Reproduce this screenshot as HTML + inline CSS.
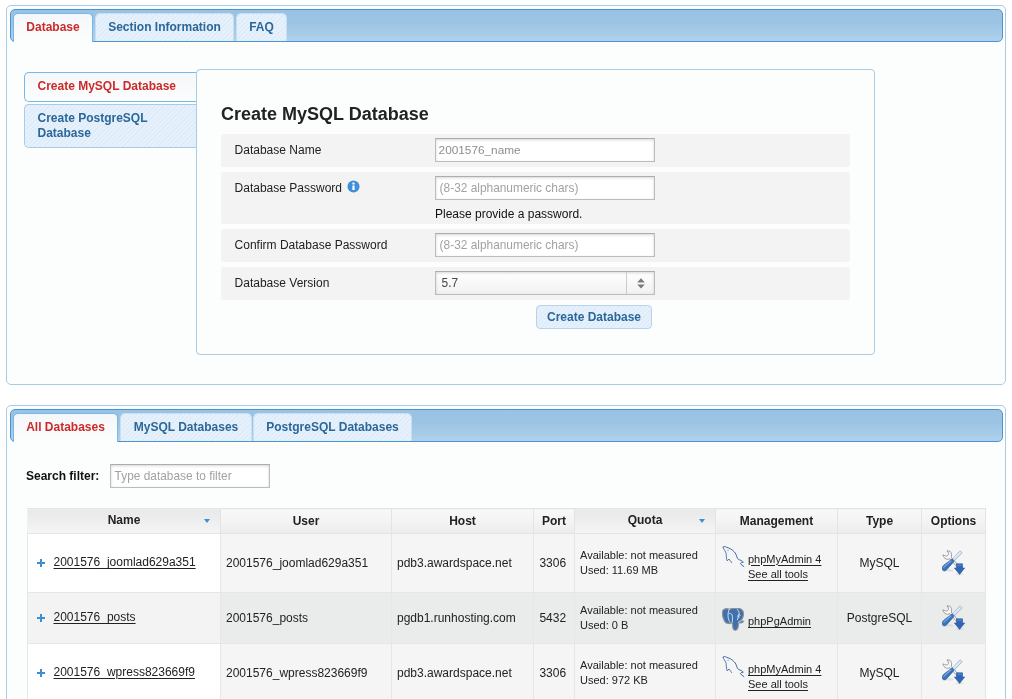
<!DOCTYPE html>
<html><head><meta charset="utf-8">
<title>Database Manager</title>
<style>
*{box-sizing:border-box;margin:0;padding:0}
#wrap{will-change:transform;position:absolute;left:0;top:0;width:1012px;height:699px}html,body{width:1012px;height:699px;overflow:hidden;background:#fff}
body{font-family:"Liberation Sans",Arial,Helvetica,sans-serif;font-size:12px;color:#222;position:relative}
.abs{position:absolute}
.box{position:absolute;border:1px solid #a9cbe4;border-radius:5px;background:#fcfdfd}
.hdr{position:absolute;border:1px solid #4a94d5;border-radius:5px;background:linear-gradient(#99c2e3 0%,#9bc4e4 42%,#b0d1ea 100%)}
.tab{position:absolute;top:3px;height:28px;border:1px solid #c9def1;border-bottom:0;border-radius:5px 5px 0 0;
  font-weight:bold;font-size:12px;line-height:26px;text-align:center;color:#2b6799;
  background:repeating-linear-gradient(135deg,#e7f1fc 0,#e7f1fc 1.9px,#dae9f7 2.2px,#dae9f7 2.8px,#e7f1fc 3.1px)}
.tab.on{height:29px;background:linear-gradient(#f4f7f9,#fcfdfd);color:#cc2a2a;border-color:#79b7e7}
.vtab{position:absolute;left:24px;width:171.5px;border:1px solid #a9cbe4;border-right:0;border-radius:5px 0 0 5px;
  font-weight:bold;font-size:12px;color:#2b6799;padding-left:12.5px;
  background:repeating-linear-gradient(135deg,#e7f1fc 0,#e7f1fc 1.9px,#dae9f7 2.2px,#dae9f7 2.8px,#e7f1fc 3.1px)}
.vtab.on{background:linear-gradient(#f4f7f9,#fcfdfd);color:#cc2a2a;border-color:#79b7e7}
.row{position:absolute;left:221px;width:629px;background:#f3f3f3;border-radius:3px}
.lbl{position:absolute;left:234.6px;font-size:12px;color:#222;white-space:nowrap}
.inp{position:absolute;left:435px;width:220px;height:24px;border:1px solid #bcbcbc;border-top-color:#adadad;background:#fff;
  box-shadow:inset 0 1px 3px rgba(0,0,0,.16);font-size:11.9px;line-height:22px;padding-left:3.6px;color:#a2a2a2;white-space:nowrap}
table{position:absolute;left:27px;top:508px;border-collapse:collapse;font-size:12px;color:#222}
th{height:25px;border:1px solid #e4e4e4;border-left-color:#f0f0f0;background:linear-gradient(#f8f8f8,#f4f4f4 45%,#ececec);font-weight:bold;color:#222;text-align:center;position:relative}
td{border:1px solid #e6e6e6;background:#f5f5f5;padding:0 5px;white-space:nowrap;vertical-align:middle}
tr.r2 td{background:#eaecec}
td.nm{background:#fff;padding-left:25.5px;position:relative}
td.nm a{position:relative;top:-0.8px}
td.pt{padding-left:5.4px}
tr.r2 td.nm{background:#f3f3f3}
td.c{text-align:center}
td.q{font-size:11px;line-height:15px}
a{color:#222;text-decoration:underline;text-underline-offset:2px;text-decoration-thickness:1px}
.arr{position:absolute;width:0;height:0;border-left:4px solid transparent;border-right:4px solid transparent;border-top:4px solid #3b8fd6}
.plus{position:absolute;left:9px;top:50%;margin-top:-4px;width:8px;height:8px}
.plus:before{content:"";position:absolute;left:0;top:3px;width:8px;height:2px;background:#3b8fd6}
.plus:after{content:"";position:absolute;left:3px;top:0;width:2px;height:8px;background:#3b8fd6}
td.mg{padding:0}
.mgw{position:relative;width:100%}
.ic{position:absolute}
.l1{position:absolute;left:32px;font-size:11px;line-height:15px;white-space:nowrap}
td.op{padding:0;line-height:0}
.tl{display:inline-block;vertical-align:middle;margin-top:-1px;margin-left:1px}
.up{position:relative;top:-1px}
th.so{background:linear-gradient(#e8e8e8,#f5f5f5)}
.arr{border-left-width:3.7px;border-right-width:3.7px}
</style></head><body><div id="wrap">

<!-- top container -->
<div class="box" style="left:6px;top:5px;width:1000px;height:380px"></div>
<div class="hdr" style="left:10px;top:9px;width:993px;height:33px">
  <div class="tab on" style="left:2px;width:80px">Database</div>
  <div class="tab" style="left:84px;width:139px">Section Information</div>
  <div class="tab" style="left:225px;width:51px">FAQ</div>
</div>

<div class="vtab on" style="top:72px;height:30px;line-height:26px">Create MySQL Database</div>
<div class="vtab" style="top:104px;height:44px;line-height:15px;padding-top:6px">Create PostgreSQL<br>Database</div>

<div class="box" style="left:196px;top:69px;width:679px;height:286px;border-radius:4px"></div>
<div class="abs" style="left:221px;top:103px;font-size:18px;font-weight:bold;color:#222;line-height:22px;white-space:nowrap">Create MySQL Database</div>

<div class="row" style="top:134px;height:33px"></div>
<div class="row" style="top:172px;height:52px"></div>
<div class="row" style="top:229px;height:33px"></div>
<div class="row" style="top:267px;height:33px"></div>

<div class="lbl" style="top:143px">Database Name</div>
<div class="lbl" style="top:181px">Database Password</div>
<div class="lbl" style="top:238px">Confirm Database Password</div>
<div class="lbl" style="top:276px">Database Version</div>

<svg class="abs" style="left:346.6px;top:180.4px" width="13" height="13" viewBox="0 0 13 13"><circle cx="6.5" cy="6.5" r="6.05" fill="#3f90d9"/><rect x="5.4" y="5.5" width="2.2" height="4.5" fill="#fff"/><rect x="5.4" y="2.6" width="2.2" height="2" rx=".5" fill="#fff"/></svg>

<div class="inp" style="top:138px;padding-left:2.6px;color:#8e8e8e;font-size:11.8px">2001576_name</div>
<div class="inp" style="top:176px">(8-32 alphanumeric chars)</div>
<div class="abs" style="left:435px;top:207px;font-size:12px;color:#111;white-space:nowrap">Please provide a password.</div>
<div class="inp" style="top:233px">(8-32 alphanumeric chars)</div>
<div class="inp" style="top:271px;color:#444;background:linear-gradient(#fff,#f1f1f1);padding-left:5.6px">5.7
  <div class="abs" style="right:27px;top:0;width:1px;height:22px;background:#ccc"></div>
  <svg class="abs" style="right:9.3px;top:5.5px" width="8" height="11" viewBox="0 0 8 11"><path d="M0.2 4.4 L4 0.3 L7.8 4.4Z M0.2 6.5 L4 10.6 L7.8 6.5Z" fill="#7a7a7a"/></svg>
</div>

<div class="abs" style="left:536px;top:305px;width:116px;height:24px;border:1px solid #b7d3eb;border-radius:4px;font-weight:bold;font-size:12px;color:#2b6799;text-align:center;line-height:22px;background:repeating-linear-gradient(135deg,#e7f1fc 0,#e7f1fc 1.9px,#dae9f7 2.2px,#dae9f7 2.8px,#e7f1fc 3.1px)">Create Database</div>

<!-- bottom container -->
<div class="box" style="left:6px;top:405px;width:1000px;height:320px"></div>
<div class="hdr" style="left:10px;top:409px;width:993px;height:33px">
  <div class="tab on" style="left:2px;width:105px">All Databases</div>
  <div class="tab" style="left:109px;width:132px">MySQL Databases</div>
  <div class="tab" style="left:242px;width:159px">PostgreSQL Databases</div>
</div>

<div class="abs" style="left:26px;top:469px;font-weight:bold;font-size:12px;color:#111;white-space:nowrap">Search filter:</div>
<div class="inp" style="left:110px;top:464px;width:160px">Type database to filter</div>

<table>
<colgroup><col style="width:193px"><col style="width:171px"><col style="width:142px"><col style="width:41px"><col style="width:141px"><col style="width:122px"><col style="width:84px"><col style="width:64px"></colgroup>
<tr><th class="so"><span class="up">Name</span><span class="arr" style="right:10px;top:10px"></span></th><th>User</th><th>Host</th><th>Port</th><th class="so"><span class="up">Quota</span><span class="arr" style="right:10px;top:10px"></span></th><th>Management</th><th>Type</th><th>Options</th></tr>
<tr style="height:59px"><td class="nm"><span class="plus"></span><a>2001576_joomlad629a351</a></td><td>2001576_joomlad629a351</td><td>pdb3.awardspace.net</td><td class="pt">3306</td><td class="q">Available: not measured<br>Used: 11.69 MB</td><td class="mg"><div class="mgw" style="height:57px"><svg class="ic" style="left:6px;top:10.7px" width="24" height="24" viewBox="0 0 24 24" fill="none" stroke="#33609f" stroke-width="0.95" stroke-linecap="round" stroke-linejoin="round"><path d="M1.2 2.8C0.5 1.1 2.6 1.1 4.6 2.3C7.2 2.9 10.1 4.5 12.3 6.9C13.7 8.5 14.1 9.6 14.5 10.7C15 12.5 15.4 13.6 16.2 14.2C17.2 15 18.3 15 19.2 15.5C20.2 16 20.8 16.6 21.3 17.2C20 17.4 19 17.6 18.3 18.5C19.5 20 20.8 20.8 21.8 21.5"/><path d="M1.2 2.8C1.5 3.6 2 4.1 2.4 4.8C3 6 3.7 7 4.2 8.2C4.1 9.5 4.2 10.8 4.4 12C4.5 13.5 4.8 15 5.2 15.9C5.8 15.4 6.4 14.6 6.9 14C7.5 14.8 8 15.4 8.4 15.9L9.7 17.6" opacity=".85"/><path d="M5.6 5.3L6.6 5.3" opacity=".5"/></svg><a class="l1" style="top:17px">phpMyAdmin 4</a><a class="l1" style="top:32px">See all tools</a></div></td><td class="c">MySQL</td><td class="c op"><svg class="tl" width="24" height="26" viewBox="0 0 24 26"><ellipse cx="5.8" cy="20.4" rx="5.6" ry="1.2" fill="#cfcfcf" opacity=".55"/><ellipse cx="17.6" cy="24.3" rx="4.2" ry="0.9" fill="#cfcfcf" opacity=".5"/><path d="M5 0.8L8 1.3C9.3 2.4 9.9 4.2 9.5 6.2L9.3 7.2L15.4 14.4L13.9 15.7L7.8 8.6C6.8 9.3 5.6 9.5 4.4 9.1C2.6 8.5 1.3 7 0.9 4.9L2.6 5.5C3.6 6.1 4.8 6.2 5.6 5.6C6.4 5 6.7 4.2 6.5 3.2Z" fill="#f7f7f7" stroke="#8c8c8c" stroke-width="0.85" stroke-linejoin="round"/><path d="M17.4 1.4C18.4 0.6 20.4 2.2 19.8 3.3L12.2 10.9L10.5 9.2Z" fill="#d3e1f0" stroke="#8ea8c9" stroke-width="0.7" stroke-linejoin="round"/><path d="M18 2.5L11.9 8.9" stroke="#f4f8fc" stroke-width="0.9" fill="none"/><path d="M10.1 8.8L12.1 10.9C11.4 12.4 9.4 14.4 7.6 16.4C6.2 18 5 19.6 3.9 20.4C2.6 21.3 0.9 20.9 0.3 19.5C-0.3 18.1 0.3 16.6 1.7 15.3C3.2 13.9 5.2 12.6 6.8 11.4C8 10.5 9.2 9.6 10.1 8.8Z" fill="#3a73b9" stroke="#2b5fa6" stroke-width="0.6"/><path d="M1.8 17.4C3.4 15.6 6 13.4 9 11" fill="none" stroke="#86b6e8" stroke-width="1.2" stroke-linecap="round" opacity=".8"/><path d="M14.5 13.8H20.5V18H22.7L17.6 24.4L12.4 18H14.5Z" fill="#3066b4" stroke="#28589f" stroke-width="0.6" stroke-linejoin="round"/><path d="M15.2 14.4H19.8V16.2H15.2Z" fill="#5f93d8" opacity=".55"/></svg></td></tr>
<tr class="r2" style="height:51px"><td class="nm"><span class="plus"></span><a>2001576_posts</a></td><td>2001576_posts</td><td>pgdb1.runhosting.com</td><td class="pt">5432</td><td class="q">Available: not measured<br>Used: 0 B</td><td class="mg"><div class="mgw" style="height:50px"><svg class="ic" style="left:6px;top:14.7px" width="23" height="24" viewBox="0 0 23 24"><path d="M2.2 1.2C4 0.3 6 0.6 7.2 1.5C9 0.6 11 0.3 13 0.5C15 0 18.5 0.3 20.2 2C21.8 3.8 21.8 6.5 21 9C20.5 10.5 19.8 11.8 19 12.6C19.8 13 20.8 13 21.6 13.2C21 14.6 19 15.2 17.6 14.6C16.8 14.4 16.6 15 16.5 16C16.4 18 16.2 20 15.3 21.2C14.4 22.4 12.6 22.6 11.6 21.6C10.8 20.6 10.7 18.6 10.6 17C10.5 15.6 10.2 14.6 9.6 14.6C8.6 15.6 7 15.8 5.8 15.2C4 15.6 2.6 13.4 1.7 11.2C0.6 8.6 0.1 5.4 0.6 3.2C0.9 2.2 1.4 1.6 2.2 1.2Z" fill="#3f72ac" stroke="#8e9196" stroke-width="1.15"/><g fill="none" stroke="#d6e8f8" stroke-width="0.9" stroke-linecap="round"><path d="M7.2 1.6C6.2 3.5 5.8 6.5 6.2 9.5C6.5 11.6 7.2 13.4 8.2 14.6"/><path d="M7.6 5.4C9.2 5.2 10.2 6.4 10.4 8.2C10.6 10 10.2 12 10.4 14"/><path d="M15.2 1.4C16.8 2.6 17.4 4.6 17 6.6C16.6 8.6 15.6 10 15.4 11.8"/><path d="M18.2 7.2C17.4 6.4 16 6.8 15.8 8C15.7 9 16.6 9.6 17.4 9.2"/><path d="M16.4 14.2C17.2 13.4 18.2 13 19 12.8"/></g></svg><a class="l1" style="top:21px">phpPgAdmin</a></div></td><td class="c">PostgreSQL</td><td class="c op"><svg class="tl" width="24" height="26" viewBox="0 0 24 26"><ellipse cx="5.8" cy="20.4" rx="5.6" ry="1.2" fill="#cfcfcf" opacity=".55"/><ellipse cx="17.6" cy="24.3" rx="4.2" ry="0.9" fill="#cfcfcf" opacity=".5"/><path d="M5 0.8L8 1.3C9.3 2.4 9.9 4.2 9.5 6.2L9.3 7.2L15.4 14.4L13.9 15.7L7.8 8.6C6.8 9.3 5.6 9.5 4.4 9.1C2.6 8.5 1.3 7 0.9 4.9L2.6 5.5C3.6 6.1 4.8 6.2 5.6 5.6C6.4 5 6.7 4.2 6.5 3.2Z" fill="#f7f7f7" stroke="#8c8c8c" stroke-width="0.85" stroke-linejoin="round"/><path d="M17.4 1.4C18.4 0.6 20.4 2.2 19.8 3.3L12.2 10.9L10.5 9.2Z" fill="#d3e1f0" stroke="#8ea8c9" stroke-width="0.7" stroke-linejoin="round"/><path d="M18 2.5L11.9 8.9" stroke="#f4f8fc" stroke-width="0.9" fill="none"/><path d="M10.1 8.8L12.1 10.9C11.4 12.4 9.4 14.4 7.6 16.4C6.2 18 5 19.6 3.9 20.4C2.6 21.3 0.9 20.9 0.3 19.5C-0.3 18.1 0.3 16.6 1.7 15.3C3.2 13.9 5.2 12.6 6.8 11.4C8 10.5 9.2 9.6 10.1 8.8Z" fill="#3a73b9" stroke="#2b5fa6" stroke-width="0.6"/><path d="M1.8 17.4C3.4 15.6 6 13.4 9 11" fill="none" stroke="#86b6e8" stroke-width="1.2" stroke-linecap="round" opacity=".8"/><path d="M14.5 13.8H20.5V18H22.7L17.6 24.4L12.4 18H14.5Z" fill="#3066b4" stroke="#28589f" stroke-width="0.6" stroke-linejoin="round"/><path d="M15.2 14.4H19.8V16.2H15.2Z" fill="#5f93d8" opacity=".55"/></svg></td></tr>
<tr style="height:58px"><td class="nm"><span class="plus"></span><a>2001576_wpress823669f9</a></td><td>2001576_wpress823669f9</td><td>pdb3.awardspace.net</td><td class="pt">3306</td><td class="q">Available: not measured<br>Used: 972 KB</td><td class="mg"><div class="mgw" style="height:57px"><svg class="ic" style="left:6px;top:10.7px" width="24" height="24" viewBox="0 0 24 24" fill="none" stroke="#33609f" stroke-width="0.95" stroke-linecap="round" stroke-linejoin="round"><path d="M1.2 2.8C0.5 1.1 2.6 1.1 4.6 2.3C7.2 2.9 10.1 4.5 12.3 6.9C13.7 8.5 14.1 9.6 14.5 10.7C15 12.5 15.4 13.6 16.2 14.2C17.2 15 18.3 15 19.2 15.5C20.2 16 20.8 16.6 21.3 17.2C20 17.4 19 17.6 18.3 18.5C19.5 20 20.8 20.8 21.8 21.5"/><path d="M1.2 2.8C1.5 3.6 2 4.1 2.4 4.8C3 6 3.7 7 4.2 8.2C4.1 9.5 4.2 10.8 4.4 12C4.5 13.5 4.8 15 5.2 15.9C5.8 15.4 6.4 14.6 6.9 14C7.5 14.8 8 15.4 8.4 15.9L9.7 17.6" opacity=".85"/><path d="M5.6 5.3L6.6 5.3" opacity=".5"/></svg><a class="l1" style="top:18px">phpMyAdmin 4</a><a class="l1" style="top:33px">See all tools</a></div></td><td class="c">MySQL</td><td class="c op"><svg class="tl" width="24" height="26" viewBox="0 0 24 26"><ellipse cx="5.8" cy="20.4" rx="5.6" ry="1.2" fill="#cfcfcf" opacity=".55"/><ellipse cx="17.6" cy="24.3" rx="4.2" ry="0.9" fill="#cfcfcf" opacity=".5"/><path d="M5 0.8L8 1.3C9.3 2.4 9.9 4.2 9.5 6.2L9.3 7.2L15.4 14.4L13.9 15.7L7.8 8.6C6.8 9.3 5.6 9.5 4.4 9.1C2.6 8.5 1.3 7 0.9 4.9L2.6 5.5C3.6 6.1 4.8 6.2 5.6 5.6C6.4 5 6.7 4.2 6.5 3.2Z" fill="#f7f7f7" stroke="#8c8c8c" stroke-width="0.85" stroke-linejoin="round"/><path d="M17.4 1.4C18.4 0.6 20.4 2.2 19.8 3.3L12.2 10.9L10.5 9.2Z" fill="#d3e1f0" stroke="#8ea8c9" stroke-width="0.7" stroke-linejoin="round"/><path d="M18 2.5L11.9 8.9" stroke="#f4f8fc" stroke-width="0.9" fill="none"/><path d="M10.1 8.8L12.1 10.9C11.4 12.4 9.4 14.4 7.6 16.4C6.2 18 5 19.6 3.9 20.4C2.6 21.3 0.9 20.9 0.3 19.5C-0.3 18.1 0.3 16.6 1.7 15.3C3.2 13.9 5.2 12.6 6.8 11.4C8 10.5 9.2 9.6 10.1 8.8Z" fill="#3a73b9" stroke="#2b5fa6" stroke-width="0.6"/><path d="M1.8 17.4C3.4 15.6 6 13.4 9 11" fill="none" stroke="#86b6e8" stroke-width="1.2" stroke-linecap="round" opacity=".8"/><path d="M14.5 13.8H20.5V18H22.7L17.6 24.4L12.4 18H14.5Z" fill="#3066b4" stroke="#28589f" stroke-width="0.6" stroke-linejoin="round"/><path d="M15.2 14.4H19.8V16.2H15.2Z" fill="#5f93d8" opacity=".55"/></svg></td></tr>
</table>

</div></body></html>
